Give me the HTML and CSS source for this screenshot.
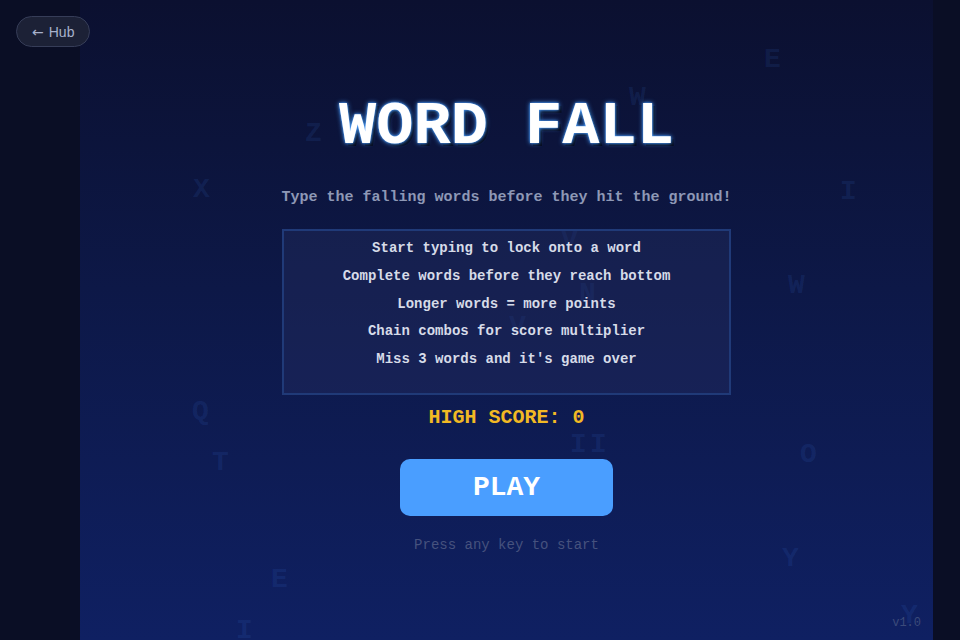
FILE: index.html
```html
<!DOCTYPE html>
<html lang="en">
<head>
<meta charset="utf-8">
<title>Word Fall</title>
<link rel="stylesheet" href="styles.css">
</head>
<body>
<a class="hub-btn" href="#"><span class="hub-arrow">←</span>Hub</a>
<main class="game">
  <div class="rain" aria-hidden="true">
    <span class="drop" style="left:684px;top:46px">E</span>
    <span class="drop" style="left:549px;top:84px">W</span>
    <span class="drop" style="left:225px;top:120px">Z</span>
    <span class="drop" style="left:113px;top:176px">X</span>
    <span class="drop" style="left:760px;top:178px">I</span>
    <span class="drop" style="left:481px;top:227px">V</span>
    <span class="drop" style="left:708px;top:272px">W</span>
    <span class="drop" style="left:499px;top:280px">N</span>
    <span class="drop" style="left:429px;top:313px">V</span>
    <span class="drop" style="left:112px;top:398px">Q</span>
    <span class="drop" style="left:490px;top:431px">I</span>
    <span class="drop" style="left:510px;top:431px">I</span>
    <span class="drop" style="left:720px;top:441px">O</span>
    <span class="drop" style="left:132px;top:449px">T</span>
    <span class="drop" style="left:702px;top:545px">Y</span>
    <span class="drop" style="left:191px;top:566px">E</span>
    <span class="drop" style="left:156px;top:617px">I</span>
    <span class="drop" style="left:821px;top:602px">Y</span>
  </div>
  <section class="menu">
    <h1 class="title">WORD FALL</h1>
    <p class="subtitle">Type the falling words before they hit the ground!</p>
    <div class="rules">
      <p>Start typing to lock onto a word</p>
      <p>Complete words before they reach bottom</p>
      <p>Longer words = more points</p>
      <p>Chain combos for score multiplier</p>
      <p>Miss 3 words and it's game over</p>
    </div>
    <div class="high-score">HIGH SCORE: 0</div>
    <button class="play-btn" type="button">PLAY</button>
    <p class="hint">Press any key to start</p>
  </section>
  <span class="version">v1.0</span>
</main>
</body>
</html>
```

FILE: styles.css
```css
* { box-sizing: border-box; }

html, body {
  margin: 0;
  padding: 0;
  height: 100%;
}

body {
  background: #0a0e25;
  overflow: hidden;
  font-family: "Courier New", "Nimbus Mono PS", "Nimbus Mono L", FreeMono, Courier, "Liberation Mono", monospace;
}

.hub-btn {
  position: fixed;
  top: 16px;
  left: 16px;
  z-index: 10;
  display: inline-flex;
  align-items: center;
  gap: 5px;
  height: 31px;
  padding: 0 15px;
  border-radius: 16px;
  background: #1c2136;
  border: 1px solid #363d58;
  color: #a7b1cc;
  font-family: "Liberation Sans", Arial, sans-serif;
  font-size: 14px;
  text-decoration: none;
}

.hub-arrow {
  font-family: "DejaVu Sans", sans-serif;
  font-size: 14px;
  line-height: 1;
}

.game {
  position: relative;
  margin-left: 80px;
  width: 853px;
  height: 640px;
  overflow: hidden;
  background: linear-gradient(180deg, #0b1030 0%, #0d1847 45%, #0f2062 100%);
}

.rain {
  position: absolute;
  inset: 0;
}

.drop {
  position: absolute;
  font-size: 28px;
  line-height: 28px;
  font-weight: bold;
  color: rgba(74, 140, 255, 0.11);
}

.menu {
  position: relative;
  display: flex;
  flex-direction: column;
  align-items: center;
  padding-top: 95px;
}

.title {
  margin: 0;
  font-size: 62px;
  line-height: 64px;
  font-weight: bold;
  color: #ffffff;
  text-shadow: 0 0 2px #4a9eff, 0 0 5px #4a9eff, 3px 3px 0 rgba(0, 0, 0, 0.55);
}

.subtitle {
  margin: 30px 0 0;
  font-size: 15px;
  line-height: 18px;
  font-weight: bold;
  color: #8e98b6;
}

.rules {
  margin-top: 22px;
  width: 449px;
  padding: 4px 20px 19px;
  border: 2px solid #203a78;
  background: rgba(40, 50, 100, 0.35);
  text-align: center;
}

.rules p {
  margin: 0;
  font-size: 14px;
  line-height: 27.75px;
  font-weight: bold;
  color: #d6dbe8;
}

.high-score {
  margin-top: 11px;
  font-size: 20px;
  line-height: 24px;
  font-weight: bold;
  color: #f2b924;
}

.play-btn {
  margin-top: 29px;
  width: 213px;
  height: 57px;
  border: none;
  border-radius: 10px;
  background: #4a9eff;
  color: #ffffff;
  font-family: inherit;
  font-size: 28px;
  font-weight: bold;
  cursor: pointer;
}

.hint {
  margin: 21px 0 0;
  font-size: 14px;
  line-height: 17px;
  color: #46527e;
}

.version {
  position: absolute;
  right: 12px;
  bottom: 10px;
  font-size: 12px;
  color: #3b4a7a;
}
```
